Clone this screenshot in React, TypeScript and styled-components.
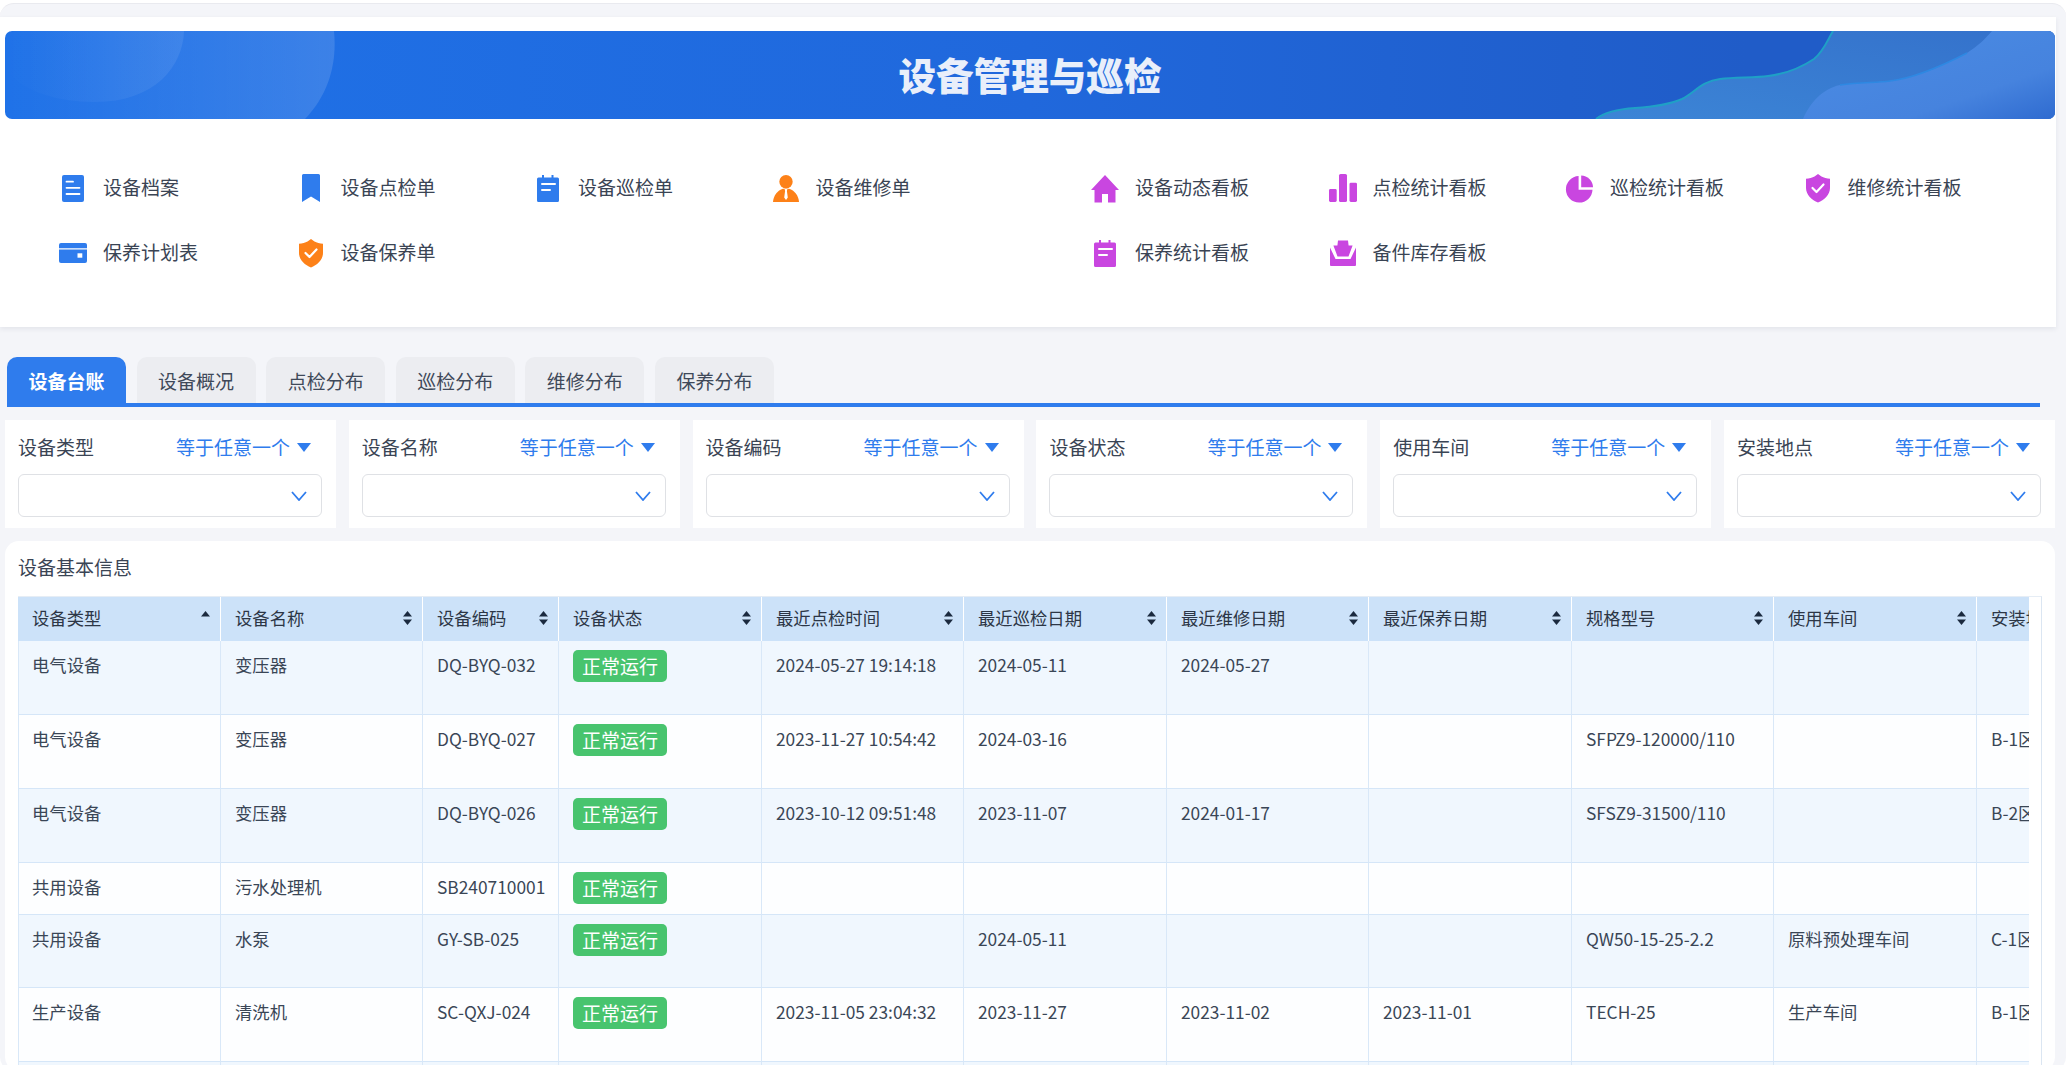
import React from "react";
import styled, { createGlobalStyle } from "styled-components";

const GlobalStyle = createGlobalStyle`
  html, body {
    margin: 0;
    height: 1065px;
    overflow: hidden;
    background: #fff;
    font-family: "Noto Sans CJK SC", "Noto Sans", sans-serif;
    color: #333e4f;
  }
  * { box-sizing: border-box; }
`;

const BLUE = "#2f7ced";
const ORANGE = "#fd8118";
const PURPLE = "#c946e0";

type IconName = "doc" | "bookmark" | "note" | "person" | "card" | "shield" | "home" | "bars" | "pie" | "bag";

const IconGlyph = ({ name }: { name: IconName }) => {
  switch (name) {
    case "doc":
      return (
        <>
          <rect x="4" y="2" width="22" height="27" rx="2" fill="currentColor" />
          <path d="M8.5 8.7H15M8.5 14.8H21.5M8.5 21H21.5" stroke="#fff" strokeWidth="1.8" strokeLinecap="round" />
        </>
      );
    case "bookmark":
      return <path d="M7.5 1H22.5A1.5 1.5 0 0 1 24 2.5V29L15 23.5L6 29V2.5A1.5 1.5 0 0 1 7.5 1Z" fill="currentColor" />;
    case "note":
      return (
        <>
          <path d="M9 2H11V4.5H18.5V2H20.5V4.5H24.5A1.5 1.5 0 0 1 26 6V27.5A1.5 1.5 0 0 1 24.5 29H5.5A1.5 1.5 0 0 1 4 27.5V6A1.5 1.5 0 0 1 5.5 4.5H9Z" fill="currentColor" />
          <path d="M9 11H22M9 17H17" stroke="#fff" strokeWidth="2" strokeLinecap="round" />
        </>
      );
    case "person":
      return (
        <>
          <circle cx="15" cy="8.7" r="6.7" fill="currentColor" />
          <path d="M2 29C2.5 22.5 6.5 17.5 12 15.8H18C23.5 17.5 27.5 22.5 28 29Z" fill="currentColor" />
          <path d="M13.6 16H16.4L15.9 18L16.8 24.5L15 27L13.2 24.5L14.1 18Z" fill="#fff" />
        </>
      );
    case "card":
      return (
        <>
          <path d="M3 5H27A2 2 0 0 1 29 7V10.2H1V7A2 2 0 0 1 3 5Z" fill="currentColor" />
          <path d="M1 11.5H29V23A2 2 0 0 1 27 25H3A2 2 0 0 1 1 23Z" fill="currentColor" />
          <rect x="19.5" y="15.3" width="4.8" height="4.4" fill="#fff" />
        </>
      );
    case "shield":
      return (
        <>
          <path d="M15 1L18.5 3.5C20.5 4.8 24 5.5 27 5.8V15C27 22 21 27 15 29.5C9 27 3 22 3 15V5.8C6 5.5 9.5 4.8 11.5 3.5Z" fill="currentColor" />
          <path d="M9.5 15L13.5 19L20.5 11.5" fill="none" stroke="#fff" strokeWidth="2.2" strokeLinecap="round" strokeLinejoin="round" />
        </>
      );
    case "home":
      return <path d="M15 2L29 17H25.5V29.5H18V21H12V29.5H4.5V17H1Z" fill="currentColor" />;
    case "bars":
      return (
        <>
          <rect x="1" y="16" width="7.7" height="13" rx="1.4" fill="currentColor" />
          <rect x="11" y="1" width="8" height="28" rx="1.6" fill="currentColor" />
          <rect x="21.5" y="9.7" width="7.5" height="19.3" rx="1.4" fill="currentColor" />
        </>
      );
    case "pie":
      return (
        <>
          <path d="M13.6 3V16.8H27.5A13.3 13.3 0 1 1 13.6 3Z" fill="currentColor" />
          <path d="M16.2 2.6A12 12 0 0 1 28 14.2H16.2Z" fill="currentColor" />
        </>
      );
    case "bag":
      return (
        <>
          <path d="M2 9.5L7.5 21H22.5L28 9.5V27A1 1 0 0 1 27 28H3A1 1 0 0 1 2 27Z" fill="currentColor" />
          <path d="M10 2.5H20L20.6 7.5H24.6L20.5 18.5H9.5L5.4 7.5H9.4Z" fill="currentColor" />
        </>
      );
  }
};

const Shell = styled.div`
  margin-top: 3px;
  height: 1068px;
  padding-top: 13px;
  background: #f4f5f9;
  border-top: 1px solid #e9eaef;
  border-radius: 14px;
  overflow: hidden;
`;

const TopCard = styled.section`
  width: 2056px;
  height: 310px;
  padding: 14px 1px 0 5px;
  background: #fff;
  box-shadow: 0 2px 5px rgba(30, 40, 70, 0.08);
`;

const Banner = styled.header`
  position: relative;
  height: 88px;
  display: flex;
  align-items: center;
  justify-content: center;
  border-radius: 7px;
  overflow: hidden;
  background: linear-gradient(90deg, #1f72e8 0%, #2068dc 50%, #205cc8 85%);
`;

const BannerArt = styled.svg`
  position: absolute;
  top: 0;
  height: 88px;
`;

const Title = styled.h1`
  position: relative;
  margin: 0 0 3px;
  font-size: 37.6px;
  line-height: 85px;
  font-weight: 900;
  color: #e9effa;
`;

const Shortcuts = styled.nav`
  display: flex;
  gap: 82px;
  padding: 54px 0 0 53px;
`;

const ShortcutGroup = styled.div`
  width: 950px;
  display: grid;
  grid-template-columns: repeat(4, 237.5px);
  row-gap: 35px;
`;

const Shortcut = styled.a`
  display: flex;
  align-items: center;
  gap: 15px;
  height: 30px;
  font-size: 19px;
  color: #3a4454;
`;

const ShortcutLabel = styled.span`
  padding-bottom: 3px;
`;

const ShortcutIcon = styled.svg<{ $color: string }>`
  width: 30px;
  height: 30px;
  flex: none;
  color: ${(p) => p.$color};
`;

const TabBar = styled.div`
  display: flex;
  gap: 10.6px;
  width: 2033px;
  height: 50px;
  margin: 30px 0 0 7px;
  border-bottom: 4px solid ${BLUE};
`;

const Tab = styled.div<{ $active?: boolean }>`
  width: 119px;
  height: 46px;
  display: flex;
  align-items: center;
  justify-content: center;
  border-radius: 10px 10px 0 0;
  font-size: 19px;
  font-weight: ${(p) => (p.$active ? 700 : 400)};
  color: ${(p) => (p.$active ? "#fff" : "#3f4959")};
  background: ${(p) => (p.$active ? BLUE : "#ecedf1")};
`;

const Filters = styled.div`
  display: grid;
  grid-template-columns: repeat(6, 331px);
  column-gap: 12.8px;
  margin: 13px 0 0 5px;
`;

const FilterCard = styled.div`
  height: 108px;
  padding: 12px 14px 0 13px;
  background: #fff;
`;

const FilterHead = styled.div`
  display: flex;
  align-items: center;
  justify-content: space-between;
  height: 28px;
  padding-right: 11px;
  font-size: 19px;
  color: #3a4454;
`;

const FilterMode = styled.span`
  display: flex;
  align-items: center;
  gap: 7px;
  color: ${BLUE};
`;

const Caret = styled.svg`
  width: 14px;
  height: 9px;
  margin-top: 3px;
`;

const SelectBox = styled.div`
  display: flex;
  align-items: center;
  justify-content: flex-end;
  height: 43px;
  margin-top: 14px;
  padding-right: 14px;
  background: #fff;
  border: 1px solid #dfe1e5;
  border-radius: 6px;
`;

const Chevron = styled.svg`
  width: 16px;
  height: 10px;
`;

const TableCard = styled.section`
  width: 2050px;
  height: 530px;
  margin: 13px 0 0 5px;
  padding: 13px 0 0 13px;
  background: #fff;
  border-radius: 14px;
  overflow: hidden;
`;

const CardTitle = styled.h2`
  margin: 0 0 14px;
  font-size: 19px;
  line-height: 26px;
  padding-bottom: 2px;
  font-weight: 400;
  color: #3a4454;
`;

const TableFrame = styled.div`
  width: 2024px;
  border-top: 1px solid #e6edf5;
  border-right: 1px solid #dbe6f2;
  padding-right: 12px;
`;

const Scroller = styled.div`
  overflow: hidden;
`;

const Table = styled.table`
  table-layout: fixed;
  width: 2460px;
  border-collapse: separate;
  border-spacing: 0;
  font-size: 17.33px;
`;

const Col = styled.col<{ $w: number }>`
  width: ${(p) => p.$w}px;
`;

const HeadCell = styled.th`
  height: 44px;
  padding: 0;
  background: #cce2f9;
  border-right: 1px solid #fff;
  font-weight: 400;
  text-align: left;
  color: #2c3646;
`;

const HeadInner = styled.div`
  display: flex;
  align-items: center;
  justify-content: space-between;
  padding: 0 10.5px 3px 14px;
`;

const SortIcon = styled.svg`
  width: 9px;
  height: 14px;
  flex: none;
  color: #1b2a3f;
`;

const Row = styled.tr<{ $stripe: boolean; $h: number }>`
  background: ${(p) => (p.$stripe ? "#f0f7fe" : "#fdfeff")};

  td {
    height: ${(p) => p.$h}px;
  }
`;

const Cell = styled.td`
  padding: 9px 14px 0;
  vertical-align: top;
  line-height: 30px;
  color: #3a4656;
  white-space: nowrap;
  border-right: 1px solid #d9e8f8;
  border-bottom: 1.5px solid #d5e6f8;

  &:first-child {
    padding-left: 13px;
    border-left: 1px solid #d9e8f8;
  }
`;

const Badge = styled.span`
  display: block;
  width: 94px;
  height: 32px;
  font-size: 19px;
  line-height: 31px;
  text-align: center;
  color: #fff;
  background: #48c46e;
  border-radius: 5px;
`;

const leftLinks: { name: IconName; color: string; label: string }[] = [
  { name: "doc", color: BLUE, label: "设备档案" },
  { name: "bookmark", color: BLUE, label: "设备点检单" },
  { name: "note", color: BLUE, label: "设备巡检单" },
  { name: "person", color: ORANGE, label: "设备维修单" },
  { name: "card", color: BLUE, label: "保养计划表" },
  { name: "shield", color: ORANGE, label: "设备保养单" },
];

const rightLinks: { name: IconName; color: string; label: string }[] = [
  { name: "home", color: PURPLE, label: "设备动态看板" },
  { name: "bars", color: PURPLE, label: "点检统计看板" },
  { name: "pie", color: PURPLE, label: "巡检统计看板" },
  { name: "shield", color: PURPLE, label: "维修统计看板" },
  { name: "note", color: PURPLE, label: "保养统计看板" },
  { name: "bag", color: PURPLE, label: "备件库存看板" },
];

const tabs = ["设备台账", "设备概况", "点检分布", "巡检分布", "维修分布", "保养分布"];
const filters = ["设备类型", "设备名称", "设备编码", "设备状态", "使用车间", "安装地点"];

const columns = [
  { title: "设备类型", w: 203 },
  { title: "设备名称", w: 202 },
  { title: "设备编码", w: 136 },
  { title: "设备状态", w: 203 },
  { title: "最近点检时间", w: 202 },
  { title: "最近巡检日期", w: 203 },
  { title: "最近维修日期", w: 202 },
  { title: "最近保养日期", w: 203 },
  { title: "规格型号", w: 202 },
  { title: "使用车间", w: 203 },
  { title: "安装地点", w: 203 },
  { title: "", w: 298 },
];

const rows = [
  { h: 74, cells: ["电气设备", "变压器", "DQ-BYQ-032", "2024-05-27 19:14:18", "2024-05-11", "2024-05-27", "", "", "", ""] },
  { h: 74, cells: ["电气设备", "变压器", "DQ-BYQ-027", "2023-11-27 10:54:42", "2024-03-16", "", "", "SFPZ9-120000/110", "", "B-1区"] },
  { h: 74, cells: ["电气设备", "变压器", "DQ-BYQ-026", "2023-10-12 09:51:48", "2023-11-07", "2024-01-17", "", "SFSZ9-31500/110", "", "B-2区"] },
  { h: 52, cells: ["共用设备", "污水处理机", "SB240710001", "", "", "", "", "", "", ""] },
  { h: 73, cells: ["共用设备", "水泵", "GY-SB-025", "", "2024-05-11", "", "", "QW50-15-25-2.2", "原料预处理车间", "C-1区"] },
  { h: 74, cells: ["生产设备", "清洗机", "SC-QXJ-024", "2023-11-05 23:04:32", "2023-11-27", "2023-11-02", "2023-11-01", "TECH-25", "生产车间", "B-1区"] },
];

const LinkItem = ({ name, color, label }: { name: IconName; color: string; label: string }) => (
  <Shortcut>
    <ShortcutIcon $color={color} viewBox="0 0 30 30">
      <IconGlyph name={name} />
    </ShortcutIcon>
    <ShortcutLabel>{label}</ShortcutLabel>
  </Shortcut>
);

const App = () => {
  return (
    <>
      <GlobalStyle />
      <Shell>
        <TopCard>
          <Banner>
            <BannerArt style={{ left: 0 }} width="340" viewBox="0 0 340 88">
              <defs>
                <linearGradient id="glowLeft" x1="0" y1="0" x2="1" y2="0">
                  <stop offset="0" stopColor="#fff" stopOpacity="0" />
                  <stop offset="1" stopColor="#fff" stopOpacity="0.13" />
                </linearGradient>
              </defs>
              <path d="M0 0H329C332 30 325 62 300 88H0Z" fill="url(#glowLeft)" />
              <path d="M0 0H179C178 35 150 71 90 71C50 71 20 60 0 40Z" fill="url(#glowLeft)" opacity="0.6" />
            </BannerArt>
            <BannerArt style={{ right: 0 }} width="465" viewBox="0 0 465 88">
              <defs>
                <linearGradient id="waveBack" x1="0" y1="1" x2="1" y2="0">
                  <stop offset="0" stopColor="#3c85d6" />
                  <stop offset="1" stopColor="#3471cb" />
                </linearGradient>
                <linearGradient id="waveFront" x1="0" y1="0" x2="1" y2="1">
                  <stop offset="0" stopColor="#4b8de4" />
                  <stop offset="0.7" stopColor="#4683de" />
                  <stop offset="1" stopColor="#2f6bd0" />
                </linearGradient>
              </defs>
              <path d="M6 88C16 80 30 78 45 77C62 76 78 74 92 68C104 62 112 50 130 48C145 46 165 47 178 45C195 43 212 36 224 28C234 20 238 8 243 0H465V88Z" fill="url(#waveBack)" />
              <path d="M6 88C16 80 30 78 45 77C62 76 78 74 92 68C104 62 112 50 130 48C145 46 165 47 178 45C195 43 212 36 224 28C234 20 238 8 243 0" fill="none" stroke="#1fa0c6" strokeWidth="2" />
              <path d="M213 88C220 72 232 58 250 54C270 51 285 52 300 50C325 47 350 36 377 22C388 15 395 8 402 0H465V88Z" fill="url(#waveFront)" />
              <path d="M250 54C270 51 285 52 300 50C325 47 350 36 377 22" fill="none" stroke="#2e88e2" strokeWidth="1.5" />
            </BannerArt>
            <Title>设备管理与巡检</Title>
          </Banner>
          <Shortcuts>
            <ShortcutGroup>
              {leftLinks.map((l) => (
                <LinkItem key={l.label} {...l} />
              ))}
            </ShortcutGroup>
            <ShortcutGroup>
              {rightLinks.map((l) => (
                <LinkItem key={l.label} {...l} />
              ))}
            </ShortcutGroup>
          </Shortcuts>
        </TopCard>

        <TabBar>
          {tabs.map((t, i) => (
            <Tab key={t} $active={i === 0}>
              {t}
            </Tab>
          ))}
        </TabBar>

        <Filters>
          {filters.map((f) => (
            <FilterCard key={f}>
              <FilterHead>
                {f}
                <FilterMode>
                  等于任意一个
                  <Caret viewBox="0 0 14 9">
                    <path d="M0 0H14L7 9Z" fill={BLUE} />
                  </Caret>
                </FilterMode>
              </FilterHead>
              <SelectBox>
                <Chevron viewBox="0 0 16 10">
                  <path d="M1 1L8 9L15 1" fill="none" stroke={BLUE} strokeWidth="1.8" />
                </Chevron>
              </SelectBox>
            </FilterCard>
          ))}
        </Filters>

        <TableCard>
          <CardTitle>设备基本信息</CardTitle>
          <TableFrame>
            <Scroller>
              <Table>
                <colgroup>
                  {columns.map((c, i) => (
                    <Col key={i} $w={c.w} />
                  ))}
                </colgroup>
                <thead>
                  <tr>
                    {columns.map((c, i) => (
                      <HeadCell key={i}>
                        <HeadInner>
                          {c.title}
                          {c.title && (
                            <SortIcon viewBox="0 0 9 14">
                              <path d="M4.5 0L9 5.5H0Z" fill="currentColor" />
                              {i > 0 && <path d="M4.5 14L0 8.5H9Z" fill="currentColor" />}
                            </SortIcon>
                          )}
                        </HeadInner>
                      </HeadCell>
                    ))}
                  </tr>
                </thead>
                <tbody>
                  {rows.map((r, ri) => (
                    <Row key={ri} $stripe={ri % 2 === 0} $h={r.h}>
                      <Cell>{r.cells[0]}</Cell>
                      <Cell>{r.cells[1]}</Cell>
                      <Cell>{r.cells[2]}</Cell>
                      <Cell>
                        <Badge>正常运行</Badge>
                      </Cell>
                      {r.cells.slice(3).map((c, ci) => (
                        <Cell key={ci}>{c}</Cell>
                      ))}
                      <Cell />
                    </Row>
                  ))}
                  <Row $stripe $h={74}>
                    {columns.map((_, i) => (
                      <Cell key={i} />
                    ))}
                  </Row>
                </tbody>
              </Table>
            </Scroller>
          </TableFrame>
        </TableCard>
      </Shell>
    </>
  );
};

export default App;
